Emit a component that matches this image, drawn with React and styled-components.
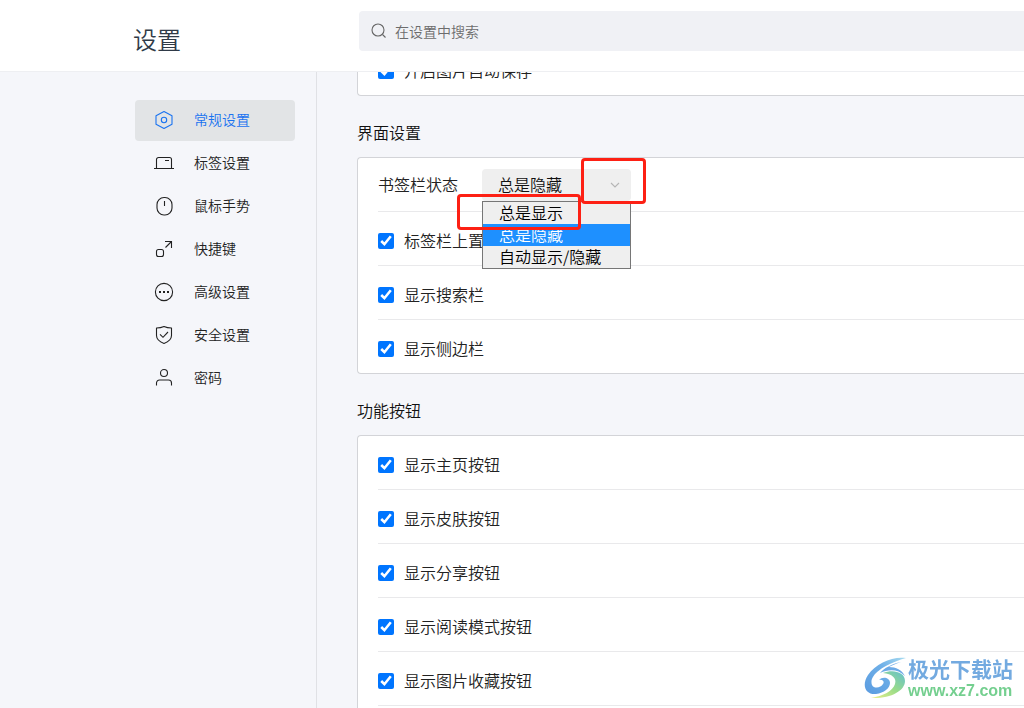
import { useState } from "react";
import styled, { createGlobalStyle } from "styled-components";

const GlobalStyle = createGlobalStyle`
  * {
    box-sizing: border-box;
  }
  body {
    margin: 0;
    background-color: #f5f6fa;
    color: #222;
    font-family: "Noto Sans CJK SC", "Noto Sans", sans-serif;
    font-size: 16px;
    font-weight: 350;
  }
`;

const Page = styled.div`
  height: 100vh;
  display: flex;
  flex-direction: column;
  overflow: hidden;
`;

const Header = styled.header`
  flex: none;
  display: flex;
  align-items: flex-start;
  height: 72px;
  padding-left: 133px;
  background-color: #fff;
  border-bottom: 1px solid #eeeff2;
`;

const Title = styled.h1`
  flex: none;
  width: 226px;
  margin: 21px 0 0;
  font-size: 24px;
  line-height: 36px;
  font-weight: 350;
  color: #2f3a47;
`;

const SearchBox = styled.label`
  flex: 1;
  display: flex;
  align-items: center;
  gap: 8px;
  height: 40px;
  margin-top: 11px;
  padding-left: 12px;
  border-radius: 4px 0 0 4px;
  background-color: #f0f1f5;
  color: #666;
`;

const SearchInput = styled.input`
  flex: 1;
  min-width: 0;
  padding: 0;
  border: none;
  outline: none;
  background: none;
  font: inherit;
  font-size: 14px;
  &::placeholder {
    color: #6c6c6c;
    opacity: 1;
  }
`;

const Body = styled.div`
  flex: 1;
  min-height: 0;
  display: flex;
`;

const Sidebar = styled.nav`
  flex: none;
  width: 317px;
  padding: 28px 21px 0 135px;
  border-right: 1px solid #e0e1e5;
`;

const NavList = styled.ul`
  display: flex;
  flex-direction: column;
  gap: 2px;
  margin: 0;
  padding: 0;
  list-style: none;
`;

const NavLink = styled.a`
  display: flex;
  align-items: center;
  gap: 20px;
  height: 41px;
  padding: 0 0 2px 19px;
  border-radius: 4px;
  font-size: 14px;
  text-decoration: none;
  color: ${(props) => (props.$active ? "#1a73f0" : "#222")};
  background-color: ${(props) => (props.$active ? "#e2e4e6" : "transparent")};
`;

const NavText = styled.span`
  padding-bottom: 2px;
`;

const Icon = styled.svg`
  flex: none;
  fill: none;
  stroke: currentColor;
  stroke-width: 1.1;
`;

const Main = styled.main`
  flex: 1;
  min-width: 0;
  overflow: hidden;
  padding-left: 40px;
`;

/* the list is shown scrolled, its first card runs under the header */
const ScrolledContent = styled.div`
  margin-top: -31px;
`;

const SectionTitle = styled.h2`
  margin: 0;
  padding: 24px 0 13px;
  font-size: 16px;
  line-height: 24px;
  font-weight: 350;
  color: #111;
`;

const Card = styled.div`
  padding-left: 20px;
  border: 1px solid #d3d4d8;
  border-right: none;
  border-radius: 4px 0 0 4px;
  background-color: #fff;
`;

const Row = styled.div`
  display: flex;
  align-items: center;
  height: 54px;
  border-bottom: 1px solid #e9e9eb;
  &:last-child {
    height: 53px;
    border-bottom: none;
  }
`;

const CheckLabel = styled.label`
  display: flex;
  align-items: center;
  gap: 10px;
  padding-top: 5px;
`;

const CheckText = styled.span`
  line-height: 24px;
  padding-bottom: 3px;
`;

const Checkbox = styled.input`
  width: 16px;
  height: 16px;
  margin: 0;
  accent-color: #0075ff;
`;

const SelectLabel = styled.label`
  width: 104px;
  padding-bottom: 2px;
`;

const SelectBox = styled.div`
  position: relative;
  display: flex;
  width: 149px;
  height: 32px;
`;

const Select = styled.select`
  appearance: none;
  width: 100%;
  padding: 0 32px 2px 16px;
  border: none;
  border-radius: 4px;
  background-color: #efefef;
  color: #111;
  font: inherit;
`;

const Arrow = styled(Icon)`
  position: absolute;
  top: 12px;
  right: 11px;
  stroke: #b5b5b5;
  pointer-events: none;
`;

const Options = styled.ul`
  position: absolute;
  top: 100%;
  left: 0;
  z-index: 1;
  width: 100%;
  margin: 0;
  padding: 0;
  border: 1px solid #767676;
  background-color: #efefef;
  list-style: none;
`;

const Option = styled.li`
  height: 22px;
  padding-left: 16px;
  line-height: 20px;
  cursor: default;
  color: ${(props) => (props.$selected ? "#fff" : "#000")};
  background-color: ${(props) => (props.$selected ? "#1e90ff" : "transparent")};
`;

const Mark = styled.div`
  position: absolute;
  z-index: 2;
  top: ${(props) => props.$top};
  left: ${(props) => props.$left};
  width: ${(props) => props.$width};
  height: ${(props) => props.$height};
  border: 3px solid #fd2014;
  border-radius: 4px;
  pointer-events: none;
`;

const Watermark = styled.div`
  position: fixed;
  right: 11px;
  bottom: 6px;
  display: flex;
  align-items: center;
  z-index: 3;
`;

const WatermarkText = styled.div`
  display: flex;
  flex-direction: column;
`;

const SiteName = styled.span`
  font-size: 21px;
  line-height: 24px;
  font-weight: 700;
  color: #73aae0;
`;

const SiteUrl = styled.span`
  font-family: "Liberation Sans", sans-serif;
  font-size: 16px;
  line-height: 22px;
  font-weight: 700;
  color: #74cf8f;
`;

const navItems = [
  {
    label: "常规设置",
    icon: (
      <>
        <path d="M10 1.5 18 5.800v8.400L10 18.500 2 14.200V5.800z" strokeLinejoin="round" />
        <circle cx="10" cy="10" r="2.700" />
      </>
    ),
  },
  {
    label: "标签设置",
    icon: (
      <path d="M0 15.500h20M2.500 15.500V6.500a2 2 0 0 1 2-2h11a2 2 0 0 1 2 2v9M11 7.500h4" />
    ),
  },
  {
    label: "鼠标手势",
    icon: (
      <>
        <rect x="3" y="1.500" width="15" height="17.500" rx="7" />
        <path d="M10.500 5v5" />
      </>
    ),
  },
  {
    label: "快捷键",
    icon: (
      <>
        <rect x="2.500" y="10.500" width="7" height="7" rx="2" />
        <path d="M11.500 8.500l6-6M11 2.500h6.500V9" />
      </>
    ),
  },
  {
    label: "高级设置",
    icon: (
      <>
        <circle cx="10" cy="10" r="8.600" />
        <path d="M5 10h2M9 10h2M13 10h2" strokeWidth="2" />
      </>
    ),
  },
  {
    label: "安全设置",
    icon: (
      <>
        <path
          d="M10 1.500c2.600 1.200 5 1.500 7.500 1.500v7.500c0 3.600-3.200 6.300-7.500 8-4.300-1.700-7.500-4.400-7.500-8V3c2.500 0 4.900-.3 7.500-1.500z"
          strokeLinejoin="round"
        />
        <path d="M6 9.300l3 3L14 7" />
      </>
    ),
  },
  {
    label: "密码",
    icon: (
      <>
        <circle cx="10" cy="5" r="3.500" />
        <path d="M2.500 17.500V15a3 3 0 0 1 3-3h9a3 3 0 0 1 3 3v2.500" />
      </>
    ),
  },
];

const barOptions = ["总是显示", "总是隐藏", "自动显示/隐藏"];

const buttonOptions = [
  "显示主页按钮",
  "显示皮肤按钮",
  "显示分享按钮",
  "显示阅读模式按钮",
  "显示图片收藏按钮",
];

const CheckRow = ({ children }) => (
  <Row>
    <CheckLabel>
      <Checkbox type="checkbox" defaultChecked />
      <CheckText>{children}</CheckText>
    </CheckLabel>
  </Row>
);

const BookmarkBarRow = () => {
  const [value, setValue] = useState("总是隐藏");
  return (
    <Row>
      <SelectLabel htmlFor="bookmark-bar">书签栏状态</SelectLabel>
      <SelectBox>
        <Select
          id="bookmark-bar"
          value={value}
          onChange={(e) => setValue(e.target.value)}
        >
          {barOptions.map((item) => (
            <option key={item}>{item}</option>
          ))}
        </Select>
        <Arrow width="10" height="8" viewBox="0 0 10 8">
          <path d="M1 2l4 4 4-4" />
        </Arrow>
        <Options role="listbox">
          {barOptions.map((item) => (
            <Option
              key={item}
              role="option"
              aria-selected={item === value}
              $selected={item === value}
              onClick={() => setValue(item)}
            >
              {item}
            </Option>
          ))}
        </Options>
        <Mark $top="-11px" $left="99px" $width="65px" $height="46px" />
        <Mark $top="25px" $left="-25px" $width="124px" $height="36px" />
      </SelectBox>
    </Row>
  );
};

const SiteLogo = () => (
  <svg width="44" height="44" viewBox="0 0 44 44">
    <defs>
      <linearGradient id="swooshBlue" x1="0" y1="1" x2="1" y2="0">
        <stop offset="0" stopColor="#5a9be0" />
        <stop offset="0.6" stopColor="#6fb0e8" />
        <stop offset="1" stopColor="#a9dcf0" />
      </linearGradient>
      <linearGradient id="swooshGreen" x1="0" y1="1" x2="1" y2="0">
        <stop offset="0" stopColor="#eef08a" />
        <stop offset="0.5" stopColor="#9bdc88" />
        <stop offset="1" stopColor="#62bfd0" />
      </linearGradient>
    </defs>
    <path
      fill="url(#swooshBlue)"
      d="M42 1C29-1 12 6 4 18c-7 11-2 20 8 19 8-1 14-6 14-11 0-5-7-7-11-3 3-1 6 1 4 4-2 4-9 5-11 1C5 20 15 9 42 1z"
    />
    <path
      fill="url(#swooshGreen)"
      d="M19 16c10-4 22-1 22 8 0 10-15 18-34 17 12-2 22-7 24-14 2-6-3-10-12-11z"
    />
    <path
      fill="#6ba9e6"
      d="M37 5C28 7 20 11 16 16c9-4 18-4 25 3-3-6-9-9-16-9 4-2 8-4 12-5z"
    />
  </svg>
);

const App = () => {
  const [active, setActive] = useState("常规设置");
  return (
    <Page>
      <GlobalStyle />
      <Header>
        <Title>设置</Title>
        <SearchBox>
          <Icon width="16" height="16" viewBox="0 0 16 16">
            <circle cx="7" cy="7" r="6" />
            <path d="M11.500 11.500l3 3" />
          </Icon>
          <SearchInput
            type="text"
            placeholder="在设置中搜索"
            aria-label="在设置中搜索"
          />
        </SearchBox>
      </Header>
      <Body>
        <Sidebar>
          <NavList>
            {navItems.map((item) => (
              <li key={item.label}>
                <NavLink
                  href="#"
                  $active={item.label === active}
                  onClick={() => setActive(item.label)}
                >
                  <Icon width="20" height="20" viewBox="0 0 20 20">
                    {item.icon}
                  </Icon>
                  <NavText>{item.label}</NavText>
                </NavLink>
              </li>
            ))}
          </NavList>
        </Sidebar>
        <Main>
          <ScrolledContent>
            <Card>
              <CheckRow>开启图片自动保存</CheckRow>
            </Card>
            <SectionTitle>界面设置</SectionTitle>
            <Card>
              <BookmarkBarRow />
              <CheckRow>标签栏上置</CheckRow>
              <CheckRow>显示搜索栏</CheckRow>
              <CheckRow>显示侧边栏</CheckRow>
            </Card>
            <SectionTitle>功能按钮</SectionTitle>
            <Card>
              {buttonOptions.map((item) => (
                <CheckRow key={item}>{item}</CheckRow>
              ))}
              <Row />
            </Card>
          </ScrolledContent>
        </Main>
      </Body>
      <Watermark>
        <SiteLogo />
        <WatermarkText>
          <SiteName>极光下载站</SiteName>
          <SiteUrl>www.xz7.com</SiteUrl>
        </WatermarkText>
      </Watermark>
    </Page>
  );
};

export default App;
